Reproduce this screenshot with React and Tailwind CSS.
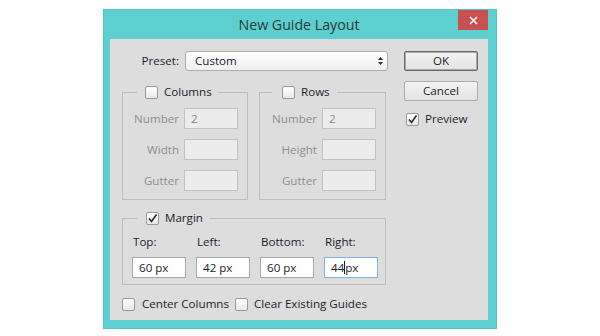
import React from "react"

const font = { fontFamily: '"Open Sans", "Noto Sans", sans-serif' }

const Check = ({ checked }) => (
  <span className="flex h-[13px] w-[13px] shrink-0 items-center justify-center rounded-[2px] border border-[#9a9a9a] bg-gradient-to-b from-white to-[#e9e9e9]">
    {checked && (
      <svg width="11" height="11" viewBox="0 0 11 11" fill="none">
        <path d="M2 5.5 L4.5 8.5 L9.5 1.5" stroke="#2a2a2a" strokeWidth="1.6" />
      </svg>
    )}
  </span>
)

const Field = ({ label, value, disabled, labelW }) => (
  <div className="flex items-center">
    <span className={`text-right ${labelW} ${disabled ? "text-[#8e8e8e]" : "text-[#1c1c2c]"}`}>{label}</span>
    <div className="ml-[5px] flex h-[21px] w-[54px] items-center border border-[#c2c2c2] bg-[#ececec] pl-[6px] text-[#8a8a8a]">
      {value}
    </div>
  </div>
)

const Group = ({ title, checked, legendCls, children, className }) => (
  <fieldset className={`border border-[#bdbdbd] ${className}`}>
    <legend className={`flex h-[16px] items-center gap-[6px] ${legendCls}`}>
      <Check checked={checked} />
      <span className="text-[#1c1c2c]">{title}</span>
    </legend>
    {children}
  </fieldset>
)

const MarginInput = ({ label, value, active }) => (
  <div className="flex w-[54px] flex-col">
    <span className="h-[16px] pl-[1px] leading-[16px] text-[#1c1c2c]">{label}</span>
    <div
      className={`mt-[7px] flex h-[21px] items-center bg-white pl-[6px] text-[#1c1c2c] ${
        active ? "border border-[#7fb3e6]" : "border border-[#a9a9a9]"
      }`}
    >
      {active ? (
        <>
          <span>44</span>
          <span className="h-[13px] w-[1px] bg-[#1c1c2c]" />
          <span>px</span>
        </>
      ) : (
        value
      )}
    </div>
  </div>
)

const Button = ({ children, primary }) => (
  <div
    className={`flex h-[20px] w-[74px] items-center justify-center rounded-[2px] bg-gradient-to-b from-[#f4f4f4] to-[#e3e3e3] text-[#1c1c2c] ${
      primary ? "border border-[#6a6a6a] shadow-[inset_0_0_0_1px_#a8a8a8]" : "border border-[#ababab]"
    }`}
  >
    {children}
  </div>
)

export default function App() {
  return (
    <div className="flex h-[336px] w-[600px] justify-center bg-white pt-[9px] text-[11.6px]" style={font}>
      <div className="flex h-[320px] w-[394px] flex-col border border-[#52c4c4] bg-[#5ccfce] pl-[6px] pr-[8px]">
        <div className="grid h-[29px] grid-cols-[1fr_auto_1fr] items-center">
          <div />
          <span className="text-[14.2px] text-[#2d3a3a]">New Guide Layout</span>
          <div className="flex justify-end self-start">
            <div className="flex h-[20px] w-[30px] items-center justify-center bg-[#c75050]">
              <svg width="9" height="9" viewBox="0 0 9 9">
                <path d="M1 1 L8 8 M8 1 L1 8" stroke="white" strokeWidth="1.6" />
              </svg>
            </div>
          </div>
        </div>

        <div className="flex h-[281px] bg-[#dddddd]">
          <div className="flex w-[278px] flex-col pl-[12px] pt-[12px]">
            <div className="flex h-[20px] items-center">
              <span className="w-[57px] text-right text-[#1c1c2c]">Preset:</span>
              <div className="ml-[6px] flex h-[20px] w-[203px] items-center justify-between rounded-[3px] border border-[#adadad] bg-gradient-to-b from-white to-[#f0f0f0] pl-[9px] pr-[3px] text-[#1c1c2c]">
                <span>Custom</span>
                <svg width="7" height="10" viewBox="0 0 7 10">
                  <path d="M3.5 1 L6 4 L1 4 Z M3.5 9 L6 6 L1 6 Z" fill="#333" />
                </svg>
              </div>
            </div>

            <div className="mt-[13px] flex gap-[11px]">
              <Group title="Columns" legendCls="ml-[14px] pl-[8px] pr-[6px]" className="w-[126px]">
                <div className="flex flex-col gap-[10px] pb-[8px] pt-[8px]">
                  <Field label="Number" value="2" disabled labelW="w-[56px]" />
                  <Field label="Width" disabled labelW="w-[56px]" />
                  <Field label="Gutter" disabled labelW="w-[56px]" />
                </div>
              </Group>
              <Group title="Rows" legendCls="ml-[12px] pl-[10px] pr-[7px]" className="w-[127px]">
                <div className="flex flex-col gap-[10px] pb-[8px] pt-[8px]">
                  <Field label="Number" value="2" disabled labelW="w-[57px]" />
                  <Field label="Height" disabled labelW="w-[57px]" />
                  <Field label="Gutter" disabled labelW="w-[57px]" />
                </div>
              </Group>
            </div>

            <Group title="Margin" checked legendCls="ml-[14px] pl-[9px] pr-[6px]" className="mt-[10px] w-[264px]">
              <div className="flex gap-[10px] pb-[6px] pl-[9px] pt-[8px]">
                <MarginInput label="Top:" value="60 px" />
                <MarginInput label="Left:" value="42 px" />
                <MarginInput label="Bottom:" value="60 px" />
                <MarginInput label="Right:" active />
              </div>
            </Group>

            <div className="mt-[11px] flex h-[16px] items-center text-[#1c1c2c]">
              <Check />
              <span className="ml-[7px]">Center Columns</span>
              <span className="ml-[6px]">
                <Check />
              </span>
              <span className="ml-[6px]">Clear Existing Guides</span>
            </div>
          </div>

          <div className="ml-[16px] flex flex-col pt-[12px]">
            <Button primary>OK</Button>
            <div className="mt-[10px]">
              <Button>Cancel</Button>
            </div>
            <div className="mt-[10px] flex h-[16px] items-center pl-[2px] text-[#1c1c2c]">
              <Check checked />
              <span className="ml-[6px]">Preview</span>
            </div>
          </div>
        </div>
      </div>
    </div>
  )
}
